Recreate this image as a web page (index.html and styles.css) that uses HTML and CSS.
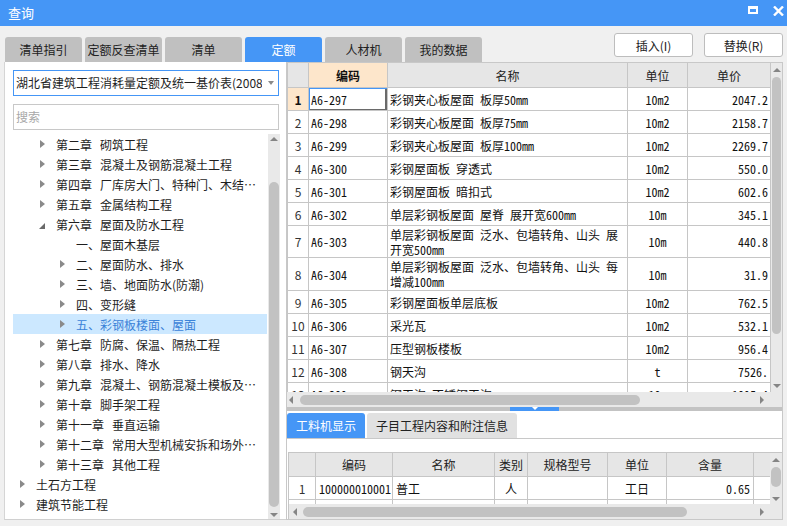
FILE: index.html
```html
<!DOCTYPE html>
<html lang="zh-CN">
<head>
<meta charset="utf-8">
<title>查询</title>
<link rel="stylesheet" href="styles.css">
</head>
<body>
<header class="titlebar">
  <span class="title">查询</span>
  <div class="winbtns">
    <svg class="ico" width="11" height="9" viewBox="0 0 11 9"><rect x="1" y="1" width="8" height="6" fill="none" stroke="#fff" stroke-width="2"/><rect x="0" y="0" width="10" height="3" fill="#fff"/></svg>
    <svg class="ico" width="11" height="10" viewBox="0 0 11 10"><path d="M1 0.5L10 9.5M10 0.5L1 9.5" stroke="#fff" stroke-width="2.4"/></svg>
  </div>
</header>

<div class="toolbar">
  <nav class="tabs">
    <div class="tab">清单指引</div>
    <div class="tab">定额反查清单</div>
    <div class="tab">清单</div>
    <div class="tab active">定额</div>
    <div class="tab">人材机</div>
    <div class="tab">我的数据</div>
  </nav>
  <div class="actions">
    <button class="btn">插入(I)</button>
    <button class="btn">替换(R)</button>
  </div>
</div>

<div class="main">
  <aside class="left">
    <div class="select"><span class="select-text">湖北省建筑工程消耗量定额及统一基价表(2008)</span><span class="caret"></span></div>
    <div class="search">搜索</div>
    <div class="treewrap">
      <ul class="tree">
        <li class="row l2"><span class="tw"><i class="ar"></i></span><span class="ch">第二章</span><span class="nm">砌筑工程</span></li>
        <li class="row l2"><span class="tw"><i class="ar"></i></span><span class="ch">第三章</span><span class="nm">混凝土及钢筋混凝土工程</span></li>
        <li class="row l2"><span class="tw"><i class="ar"></i></span><span class="ch">第四章</span><span class="nm">厂库房大门、特种门、木结构工程</span></li>
        <li class="row l2"><span class="tw"><i class="ar"></i></span><span class="ch">第五章</span><span class="nm">金属结构工程</span></li>
        <li class="row l2"><span class="tw"><i class="ar open"></i></span><span class="ch">第六章</span><span class="nm">屋面及防水工程</span></li>
        <li class="row l3"><span class="tw"></span><span class="nm0">一、屋面木基层</span></li>
        <li class="row l3"><span class="tw"><i class="ar"></i></span><span class="nm0">二、屋面防水、排水</span></li>
        <li class="row l3"><span class="tw"><i class="ar"></i></span><span class="nm0">三、墙、地面防水(防潮)</span></li>
        <li class="row l3"><span class="tw"><i class="ar"></i></span><span class="nm0">四、变形缝</span></li>
        <li class="row l3 sel"><span class="tw"><i class="ar"></i></span><span class="nm0">五、彩钢板楼面、屋面</span></li>
        <li class="row l2"><span class="tw"><i class="ar"></i></span><span class="ch">第七章</span><span class="nm">防腐、保温、隔热工程</span></li>
        <li class="row l2"><span class="tw"><i class="ar"></i></span><span class="ch">第八章</span><span class="nm">排水、降水</span></li>
        <li class="row l2"><span class="tw"><i class="ar"></i></span><span class="ch">第九章</span><span class="nm">混凝土、钢筋混凝土模板及支架工程</span></li>
        <li class="row l2"><span class="tw"><i class="ar"></i></span><span class="ch">第十章</span><span class="nm">脚手架工程</span></li>
        <li class="row l2"><span class="tw"><i class="ar"></i></span><span class="ch">第十一章</span><span class="nm">垂直运输</span></li>
        <li class="row l2"><span class="tw"><i class="ar"></i></span><span class="ch">第十二章</span><span class="nm">常用大型机械安拆和场外运输费用</span></li>
        <li class="row l2"><span class="tw"><i class="ar"></i></span><span class="ch">第十三章</span><span class="nm">其他工程</span></li>
        <li class="row l1"><span class="tw"><i class="ar"></i></span><span class="nm0">土石方工程</span></li>
        <li class="row l1"><span class="tw"><i class="ar"></i></span><span class="nm0">建筑节能工程</span></li>
      </ul>
      <div class="vscroll vs-tree"><i class="up"></i><div class="thumb"></div><i class="down"></i></div>
    </div>
  </aside>

  <section class="right">
    <div class="gridtop">
      <div class="grid">
        <div class="c h"></div><div class="c h key">编码</div><div class="c h">名称</div><div class="c h">单位</div><div class="c h">单价</div>

        <div class="c n cur">1</div><div class="c focus">A6-297</div><div class="c">彩钢夹心板屋面 板厚50mm</div><div class="c u">10m2</div><div class="c p">2047.2</div>
        <div class="c n">2</div><div class="c">A6-298</div><div class="c">彩钢夹心板屋面 板厚75mm</div><div class="c u">10m2</div><div class="c p">2158.7</div>
        <div class="c n">3</div><div class="c">A6-299</div><div class="c">彩钢夹心板屋面 板厚100mm</div><div class="c u">10m2</div><div class="c p">2269.7</div>
        <div class="c n">4</div><div class="c">A6-300</div><div class="c">彩钢屋面板 穿透式</div><div class="c u">10m2</div><div class="c p">550.0</div>
        <div class="c n">5</div><div class="c">A6-301</div><div class="c">彩钢屋面板 暗扣式</div><div class="c u">10m2</div><div class="c p">602.6</div>
        <div class="c n">6</div><div class="c">A6-302</div><div class="c">单层彩钢板屋面 屋脊 展开宽600mm</div><div class="c u">10m</div><div class="c p">345.1</div>
        <div class="c n">7</div><div class="c">A6-303</div><div class="c two">单层彩钢板屋面 泛水、包墙转角、山头 展<br>开宽500mm</div><div class="c u">10m</div><div class="c p">440.8</div>
        <div class="c n">8</div><div class="c">A6-304</div><div class="c two">单层彩钢板屋面 泛水、包墙转角、山头 每<br>增减100mm</div><div class="c u">10m</div><div class="c p">31.9</div>
        <div class="c n">9</div><div class="c">A6-305</div><div class="c">彩钢屋面板单层底板</div><div class="c u">10m2</div><div class="c p">762.5</div>
        <div class="c n">10</div><div class="c">A6-306</div><div class="c">采光瓦</div><div class="c u">10m2</div><div class="c p">532.1</div>
        <div class="c n">11</div><div class="c">A6-307</div><div class="c">压型钢板楼板</div><div class="c u">10m2</div><div class="c p">956.4</div>
        <div class="c n">12</div><div class="c">A6-308</div><div class="c">钢天沟</div><div class="c u">t</div><div class="c p">7526.</div>
        <div class="c n">13</div><div class="c">A6-309</div><div class="c">钢天沟 不锈钢天沟</div><div class="c u">10m</div><div class="c p">1095.4</div>
      </div>
      <div class="vscroll vs-main"><i class="up"></i><div class="thumb"></div><i class="down"></i></div>
    </div>
    <div class="hscroll hs-main"><i class="left-ar"></i><div class="thumb"></div><i class="right-ar"></i></div>
    <div class="splitter"><span class="handle"><i></i></span></div>

    <div class="subtabs">
      <div class="stab active">工料机显示</div>
      <div class="stab">子目工程内容和附注信息</div>
    </div>
    <div class="gap"></div>

    <div class="subwrap">
      <div class="subtop">
        <div class="sgrid">
          <div class="c h"></div><div class="c h">编码</div><div class="c h">名称</div><div class="c h">类别</div><div class="c h">规格型号</div><div class="c h">单位</div><div class="c h">含量</div><div class="c h last"></div>
          <div class="c n">1</div><div class="c">100000010001</div><div class="c cj">普工</div><div class="c u cj">人</div><div class="c"></div><div class="c u cj">工日</div><div class="c p">0.65</div><div class="c last"></div>
          <div class="c n"></div><div class="c"></div><div class="c"></div><div class="c"></div><div class="c"></div><div class="c"></div><div class="c"></div><div class="c last"></div>
        </div>
        <div class="vscroll vs-sub"><i class="up"></i><div class="thumb"></div><i class="down"></i></div>
      </div>
      <div class="hscroll hs-sub"><i class="left-ar"></i><div class="thumb"></div><i class="right-ar"></i></div>
    </div>
  </section>
</div>
</body>
</html>
```

FILE: styles.css
```css
* { box-sizing: border-box; }
html, body { margin: 0; padding: 0; }
body {
  width: 787px;
  height: 526px;
  overflow: hidden;
  background: #f0f0f0;
  font-family: "Noto Sans CJK SC", "Noto Sans", sans-serif;
  font-size: 12px;
  color: #1e1e1e;
}

/* title bar */
.titlebar {
  height: 26px;
  background: #4596f6;
  color: #fff;
  display: flex;
  align-items: center;
  padding-left: 8px;
}
.title { font-size: 13px; line-height: 26px; }
.winbtns {
  margin-left: auto;
  align-self: flex-start;
  display: flex;
  align-items: flex-start;
  gap: 14px;
  padding: 6px 3px 0 0;
}
.ico { display: block; }

/* toolbar */
.toolbar { height: 36px; display: flex; padding-left: 5px; }
.tabs { display: flex; gap: 3px; align-self: flex-end; }
.tab {
  width: 77px;
  height: 25px;
  line-height: 25px;
  text-align: center;
  background: #c0c0c0;
  border-radius: 3px 3px 0 0;
  color: #222;
}
.tab.active { background: #4596f6; color: #fff; }
.actions { margin-left: auto; display: flex; gap: 11px; padding: 7px 4px 0 0; align-self: flex-start; }
.btn {
  width: 79px;
  height: 24px;
  border: 1px solid #bdbdbd;
  border-radius: 3px;
  background: #fff;
  font: inherit;
  color: #222;
  padding: 0;
}

/* main */
.main { display: flex; height: 458px; padding-left: 4px; }

.left {
  width: 282px;
  background: #fff;
  border-left: 1px solid #d5d5d5;
  border-bottom: 1px solid #d0d0d0;
  padding: 8px 0 0 8px;
  display: flex;
  flex-direction: column;
}
.select {
  width: 266px;
  height: 26px;
  border: 1px solid #4596f6;
  display: flex;
  align-items: center;
  padding-left: 2px;
}
.select-text { width: 246px; overflow: hidden; white-space: nowrap; line-height: 24px; }
.caret {
  margin-left: auto;
  margin-right: 4px;
  border-left: 3.5px solid transparent;
  border-right: 3.5px solid transparent;
  border-top: 4px solid #8a8a8a;
}
.search {
  margin-top: 8px;
  width: 266px;
  height: 26px;
  border: 1px solid #c8c8c8;
  padding-left: 2px;
  line-height: 24px;
  color: #a8a8a8;
}
.treewrap { margin-top: 4px; flex: 1; display: flex; min-height: 0; }
.tree { width: 254px; margin: 0; padding: 0; list-style: none; }
.row {
  height: 20px;
  display: flex;
  align-items: center;
  padding-right: 10px;
  white-space: nowrap;
  color: #1e1e1e;
}
.row.l1 { padding-left: 7px; }
.row.l2 { padding-left: 27px; }
.row.l3 { padding-left: 47px; }
.row.sel { background: #cce8ff; color: #3a82d8; }
.tw { width: 16px; flex: none; display: flex; align-items: center; height: 20px; }
.ar {
  display: block;
  width: 0;
  height: 0;
  border-top: 4px solid transparent;
  border-bottom: 4px solid transparent;
  border-left: 5px solid #8a8a8a;
}
.ar.open {
  border-top: 6px solid transparent;
  border-bottom: 0;
  border-left: 0;
  border-right: 6px solid #6a6a6a;
  margin: 4px 0 0 -1px;
}
.ch { flex: none; }
.nm { margin-left: 8px; overflow: hidden; text-overflow: ellipsis; min-width: 0; }
.nm0 { overflow: hidden; text-overflow: ellipsis; }

/* scrollbars */
.vscroll {
  display: flex;
  flex-direction: column;
  align-items: center;
  background: #e9e9e9;
  flex: none;
}
.vscroll .up {
  border-left: 4px solid transparent;
  border-right: 4px solid transparent;
  border-bottom: 4px solid #858585;
}
.vscroll .down {
  margin-top: auto;
  border-left: 4px solid transparent;
  border-right: 4px solid transparent;
  border-top: 4px solid #858585;
}
.vscroll .thumb { background: #c2c2c2; border-radius: 5px; }

.vs-tree { width: 12px; margin-left: 1px; padding: 3px 0 2px; }
.vs-tree .thumb { width: 10px; margin-top: 41px; height: 325px; }

.vs-main { width: 11px; height: 329px; padding: 5px 0 4px; }
.vs-main .thumb { width: 9px; margin-top: 5px; height: 257px; }

.hscroll {
  display: flex;
  align-items: center;
  background: #e9e9e9;
  height: 15px;
  flex: none;
}
.hscroll .left-ar {
  border-top: 4px solid transparent;
  border-bottom: 4px solid transparent;
  border-right: 4px solid #858585;
}
.hscroll .right-ar {
  margin-left: auto;
  border-top: 4px solid transparent;
  border-bottom: 4px solid transparent;
  border-left: 4px solid #858585;
}
.hscroll .thumb { height: 10px; background: #c2c2c2; border-radius: 5px; }
.hs-main { padding: 0 18px 0 2px; }
.hs-main .thumb { margin-left: 7px; width: 340px; }

/* right panel */
.right {
  width: 497px;
  background: #fff;
  border: 1px solid #c8c8c8;
  display: flex;
  flex-direction: column;
}
.gridtop { height: 329px; display: flex; overflow: hidden; flex: none; }
.grid {
  width: 484px;
  height: 329px;
  overflow: hidden;
  display: grid;
  grid-template-columns: 21px 79px 240px 60px 83px;
  grid-template-rows: 25px repeat(6, 23px) 32px 33px repeat(5, 23px);
  align-content: start;
  border-left: 1px solid #c6c6c6;
}
.c {
  border-right: 1px solid #c6c6c6;
  border-bottom: 1px solid #c6c6c6;
  display: flex;
  align-items: center;
  padding: 0 2px;
  white-space: nowrap;
  overflow: hidden;
  font-family: "Noto Sans Mono CJK SC", "Noto Sans CJK SC", monospace;
  font-size: 12px;
  color: #111;
}
.c.h {
  background: #e6e6e6;
  justify-content: center;
  font-family: "Noto Sans CJK SC", sans-serif;
  color: #222;
}
.c.h.key { background: #fde6cb; font-weight: bold; color: #111; }
.c.n { justify-content: center; font-family: "Noto Sans CJK SC", sans-serif; color: #333; padding: 0; }
.c.n.cur { background: #fde6cb; font-weight: bold; color: #111; }
.c.focus { box-shadow: inset 1px 1px 0 #4596f6, inset -2px -1px 0 #6a6a6a; }
.c.u { justify-content: center; }
.c.p { justify-content: flex-end; }
.c.two { line-height: 15px; }
.c.cj { font-family: "Noto Sans CJK SC", sans-serif; }

.splitter { height: 4px; background: #c3c3c3; flex: none; display: flex; }
.handle {
  margin-left: 223px;
  width: 49px;
  background: #4596f6;
  display: flex;
  justify-content: center;
}
.handle i {
  border-left: 3px solid transparent;
  border-right: 3px solid transparent;
  border-top: 3px solid #fff;
}

.subtabs {
  height: 28px;
  flex: none;
  padding-top: 2px;
  display: flex;
  gap: 2px;
  border-bottom: 1px solid #c8c8c8;
}
.stab {
  height: 25px;
  line-height: 25px;
  padding: 0 10px;
  background: #e1e1e1;
  border-radius: 3px 3px 0 0;
  color: #222;
}
.stab.active { width: 78px; padding: 0; text-align: center; background: #4596f6; color: #fff; }
.subtabs .stab:last-child { width: 150px; text-align: center; padding: 0; }
.gap { height: 13px; flex: none; }

.subwrap {
  margin-left: 1px;
  border-left: 1px solid #c6c6c6;
  border-top: 1px solid #c6c6c6;
  flex: 1;
  display: flex;
  flex-direction: column;
}
.subtop { height: 51px; display: flex; overflow: hidden; flex: none; }
.sgrid {
  width: 481px;
  display: grid;
  grid-template-columns: 27px 77px 102px 33px 80px 59px 87px 16px;
  grid-template-rows: 24px 23px 23px;
  align-content: start;
  overflow: hidden;
}
.sgrid .c { padding: 0 3px; }
.sgrid .c.last { border-right: 0; }
.sgrid .c.n { padding: 0; }
.vs-sub { width: 12px; height: 51px; padding: 5px 0 3px; }
.vs-sub .thumb { width: 10px; height: 20px; margin-top: 5px; }
.hs-sub { padding: 0 18px 0 4px; height: 15px; }
.hs-sub .thumb { margin-left: 6px; width: 384px; }
```
